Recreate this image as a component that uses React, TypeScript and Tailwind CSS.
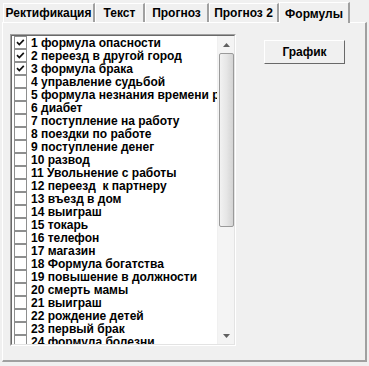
import React from "react";

const items: { t: string; c?: boolean }[] = [
  { t: "1 формула опасности", c: true },
  { t: "2 переезд в другой город", c: true },
  { t: "3 формула брака", c: true },
  { t: "4 управление судьбой" },
  { t: "5 формула незнания времени рождения" },
  { t: "6 диабет" },
  { t: "7 поступление на работу" },
  { t: "8 поездки по работе" },
  { t: "9 поступление денег" },
  { t: "10 развод" },
  { t: "11 Увольнение с работы" },
  { t: "12 переезд  к партнеру" },
  { t: "13 въезд в дом" },
  { t: "14 выиграш" },
  { t: "15 токарь" },
  { t: "16 телефон" },
  { t: "17 магазин" },
  { t: "18 Формула богатства" },
  { t: "19 повышение в должности" },
  { t: "20 смерть мамы" },
  { t: "21 выиграш" },
  { t: "22 рождение детей" },
  { t: "23 первый брак" },
  { t: "24 формула болезни" },
];

const tabs = [
  { t: "Ректификация", w: "w-[92px]" },
  { t: "Текст", w: "w-[50px]" },
  { t: "Прогноз", w: "w-[64px]" },
  { t: "Прогноз 2", w: "w-[70px]" },
];

function Check({ on }: { on?: boolean }) {
  return (
    <div className="w-[13px] h-[13px] shrink-0 border border-[#8e8f8f] bg-white flex items-center justify-center">
      {on && (
        <svg width="11" height="11" viewBox="0 0 11 11">
          <path d="M2 5.2 L4.3 7.5 L8.8 2.8" stroke="#111" strokeWidth="1.7" fill="none" />
        </svg>
      )}
    </div>
  );
}

export default function App() {
  return (
    <div
      className="w-[369px] h-[366px] bg-[#f0f0f0] overflow-hidden text-black font-bold text-[12px] leading-none"
      style={{ fontFamily: '"Liberation Sans", Arial, sans-serif' }}
    >
      <div className="flex items-end h-[22px] pl-[3px]">
        {tabs.map((tab) => (
          <div
            key={tab.t}
            className={`${tab.w} h-[19px] flex items-center justify-center border-l border-t border-r-2 border-l-white border-t-white border-r-[#a0a0a0] whitespace-nowrap`}
          >
            {tab.t}
          </div>
        ))}
        <div className="w-[71px] h-[21px] flex items-start pt-[5px] justify-center border-l border-t border-r-2 border-l-white border-t-white border-r-[#a0a0a0] bg-[#f0f0f0] relative top-[1px] z-10 whitespace-nowrap">
          Формулы
        </div>
      </div>
      <div className="h-[340px] ml-[2px] mr-[2px] border-t border-l border-t-white border-l-white border-b-2 border-r-2 border-b-[#a0a0a0] border-r-[#a0a0a0] flex">
        <div className="ml-[7px] mt-[11px] w-[226px] h-[312px] border border-t-[#a0a0a0] border-l-[#a0a0a0] border-b-white border-r-white">
          <div className="w-full h-full border border-t-[#696969] border-l-[#696969] border-b-[#e3e3e3] border-r-[#e3e3e3] bg-white flex">
            <div className="flex-1 overflow-hidden pl-[2px]">
              {items.map((it) => (
                <div key={it.t} className="h-[13px] flex items-center gap-[4px] whitespace-pre">
                  <Check on={it.c} />
                  <span>{it.t}</span>
                </div>
              ))}
            </div>
            <div className="w-[17px] shrink-0 bg-[#f4f4f4] flex flex-col items-center border-l border-[#f0f0f0]">
              <div className="h-[17px] flex items-center justify-center">
                <svg width="7" height="4" viewBox="0 0 7 4">
                  <path d="M0 4 L3.5 0 L7 4 Z" fill="#606060" />
                </svg>
              </div>
              <div className="w-[15px] h-[174px] border border-[#9a9a9a] rounded-[2px] bg-gradient-to-r from-[#f2f2f2] via-[#e6e6e6] to-[#d4d4d4]" />
              <div className="flex-1" />
              <div className="h-[17px] flex items-center justify-center">
                <svg width="7" height="4" viewBox="0 0 7 4">
                  <path d="M0 0 L3.5 4 L7 0 Z" fill="#606060" />
                </svg>
              </div>
            </div>
          </div>
        </div>
        <div className="ml-[28px] mt-[17px]">
          <div className="w-[81px] h-[24px] border border-t-white border-l-white border-b-[#696969] border-r-[#696969] flex items-center justify-center">
            График
          </div>
        </div>
      </div>
    </div>
  );
}
